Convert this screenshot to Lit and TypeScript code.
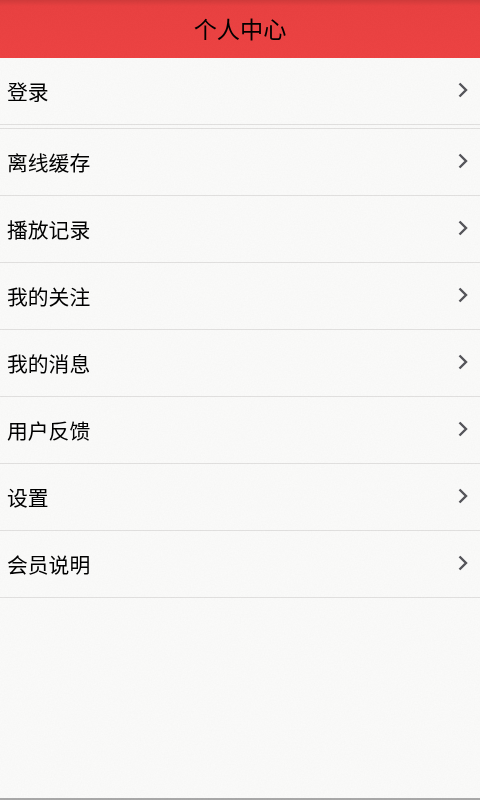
import { LitElement, html, css } from "lit";
import { customElement } from "lit/decorators.js";

const GROUPS = [
  ["登录"],
  ["离线缓存", "播放记录", "我的关注", "我的消息", "用户反馈", "设置", "会员说明"],
];

@customElement("app-root")
export class AppRoot extends LitElement {
  static styles = css`
    :host {
      display: flex;
      flex-direction: column;
      position: relative;
      width: 480px;
      height: 800px;
      background: #fbfbfa;
      font-family: "Liberation Sans", "Noto Sans CJK SC", sans-serif;
      color: #000;
      overflow: hidden;
    }
    .bar {
      flex: none;
      height: 58px;
      display: flex;
      align-items: center;
      justify-content: center;
      padding-bottom: 2px;
      box-sizing: border-box;
      font-size: 23.2px;
      color: #000;
      background: linear-gradient(#d23a3a 0, #ea4141 6px, #ee4343 100%);
    }
    .list { flex: 1; display: flex; flex-direction: column; }
    .group + .group { margin-top: 3px; border-top: 1px solid #e2e1e0; }
    .row {
      height: 66px;
      display: flex;
      align-items: center;
      justify-content: space-between;
      padding: 0 12px 0 7px;
      font-size: 20.8px;
      border-bottom: 1px solid #e2e1e0;
    }
    .row span { line-height: 30px; margin-top: 3px; }
    .row svg { width: 10px; height: 16px; margin-bottom: 2px; }
    .row path { fill: none; stroke: #55555a; stroke-width: 2.4; }
    .end { flex: none; height: 2px; background: #a9a9a9; }
    .grain {
      position: absolute;
      inset: 0;
      width: 480px;
      height: 800px;
      opacity: 0.06;
      pointer-events: none;
      mix-blend-mode: multiply;
    }
  `;

  render() {
    return html`
      <div class="bar">个人中心</div>
      <div class="list">
        ${GROUPS.map(
          (g) => html`<div class="group">
            ${g.map(
              (t) => html`<div class="row">
                <span>${t}</span>
                <svg viewBox="0 0 10 16"><path d="M1.5 1.5 L8 8 L1.5 14.5" /></svg>
              </div>`
            )}
          </div>`
        )}
      </div>
      <div class="end"></div>
      <svg class="grain" aria-hidden="true">
        <filter id="grain">
          <feTurbulence type="fractalNoise" baseFrequency="0.7" numOctaves="2" />
          <feColorMatrix values="0 0 0 0 0.4 0 0 0 0 0.4 0 0 0 0 0.4 1 0 0 0 0" />
        </filter>
        <rect width="480" height="800" filter="url(#grain)" />
      </svg>
    `;
  }
}
